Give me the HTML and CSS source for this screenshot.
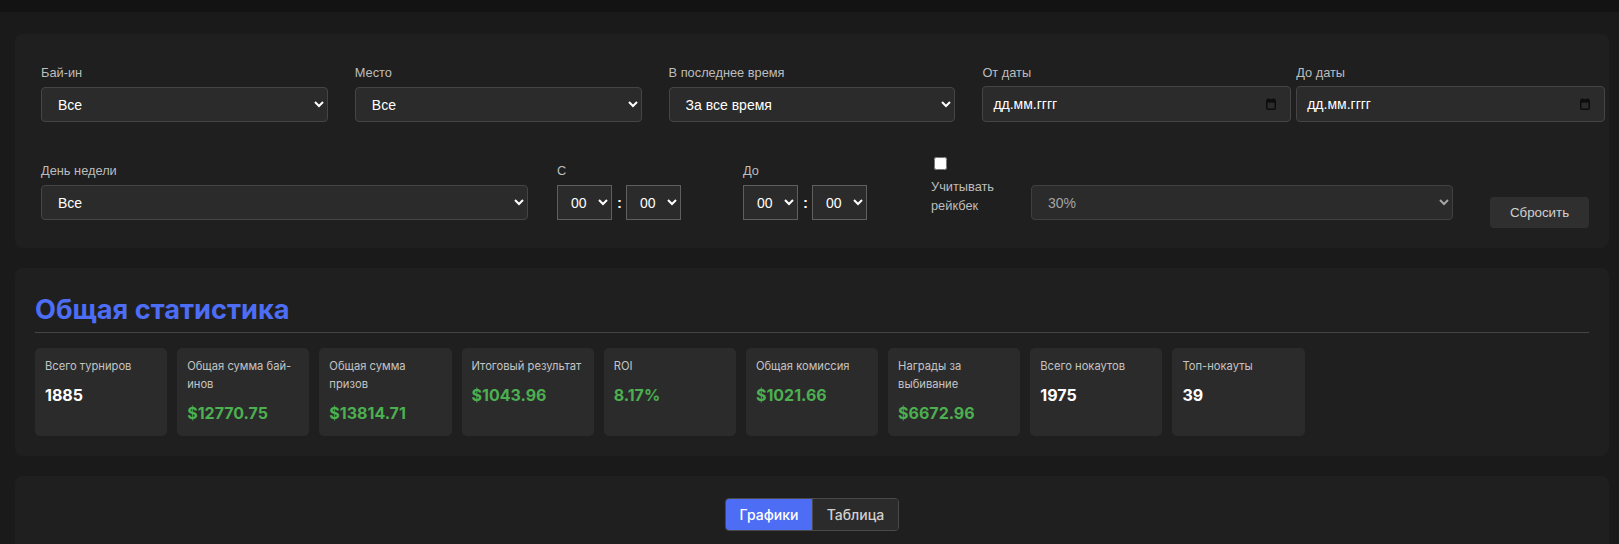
FILE: index.html
```html
<!DOCTYPE html>
<html lang="ru">
<head>
<meta charset="utf-8">
<title>Статистика</title>
<link rel="stylesheet" href="styles.css">
</head>
<body>
<div class="topbar"></div>
<main class="page">
  <section class="card filters">
    <div class="row-top">
      <div class="field">
        <label class="flabel">Бай-ин</label>
        <select class="sel"><option>Все</option></select>
      </div>
      <div class="field">
        <label class="flabel">Место</label>
        <select class="sel"><option>Все</option></select>
      </div>
      <div class="field">
        <label class="flabel">В последнее время</label>
        <select class="sel"><option>За все время</option></select>
      </div>
      <div class="field">
        <label class="flabel">От даты</label>
        <div class="date-input"><span>дд.мм.гггг</span>
          <svg class="cal" width="10" height="12" viewBox="0 0 10 12"><rect x="0.75" y="1.75" width="8.5" height="9.5" rx="1" fill="none" stroke="#0d0d0d" stroke-width="1.5"/><rect x="1" y="2" width="8" height="2.6" fill="#0d0d0d"/><path d="M2.5 0.3v2M7.5 0.3v2" stroke="#0d0d0d" stroke-width="1.3"/></svg>
        </div>
      </div>
      <div class="field">
        <label class="flabel">До даты</label>
        <div class="date-input"><span>дд.мм.гггг</span>
          <svg class="cal" width="10" height="12" viewBox="0 0 10 12"><rect x="0.75" y="1.75" width="8.5" height="9.5" rx="1" fill="none" stroke="#0d0d0d" stroke-width="1.5"/><rect x="1" y="2" width="8" height="2.6" fill="#0d0d0d"/><path d="M2.5 0.3v2M7.5 0.3v2" stroke="#0d0d0d" stroke-width="1.3"/></svg>
        </div>
      </div>
    </div>
    <div class="row-bottom">
      <div class="field">
        <label class="flabel">День недели</label>
        <select class="sel"><option>Все</option></select>
      </div>
      <div class="field">
        <label class="flabel">С</label>
        <div class="time">
          <select class="tsel"><option>00</option></select>
          <span class="colon">:</span>
          <select class="tsel"><option>00</option></select>
        </div>
      </div>
      <div class="field">
        <label class="flabel">До</label>
        <div class="time">
          <select class="tsel"><option>00</option></select>
          <span class="colon">:</span>
          <select class="tsel"><option>00</option></select>
        </div>
      </div>
      <div class="rake">
        <input type="checkbox" class="chk">
        <span class="rake-text">Учитывать рейкбек</span>
      </div>
      <div class="field">
        <select class="sel sel-muted"><option>30%</option></select>
      </div>
      <button class="reset">Сбросить</button>
    </div>
  </section>

  <section class="card stats">
    <h2 class="title">Общая статистика</h2>
    <div class="stat-grid">
      <div class="stat"><div class="slabel">Всего турниров</div><div class="sval">1885</div></div>
      <div class="stat"><div class="slabel">Общая сумма бай-инов</div><div class="sval green">$12770.75</div></div>
      <div class="stat"><div class="slabel">Общая сумма призов</div><div class="sval green">$13814.71</div></div>
      <div class="stat"><div class="slabel">Итоговый результат</div><div class="sval green">$1043.96</div></div>
      <div class="stat"><div class="slabel">ROI</div><div class="sval green">8.17%</div></div>
      <div class="stat"><div class="slabel">Общая комиссия</div><div class="sval green">$1021.66</div></div>
      <div class="stat"><div class="slabel">Награды за выбивание</div><div class="sval green">$6672.96</div></div>
      <div class="stat"><div class="slabel">Всего нокаутов</div><div class="sval">1975</div></div>
      <div class="stat"><div class="slabel">Топ-нокауты</div><div class="sval">39</div></div>
    </div>
  </section>

  <section class="card views">
    <div class="tabs">
      <button class="tab active">Графики</button>
      <button class="tab">Таблица</button>
    </div>
  </section>
</main>
</body>
</html>
```

FILE: styles.css
```css
* { box-sizing: border-box; }
html, body { margin: 0; padding: 0; }
body {
  background: #1a1a1a;
  color: #e0e0e0;
  font-family: Inter, "Noto Sans", sans-serif;
  overflow: hidden;
}
.topbar { height: 12px; background: #131313; }
.page {
  padding: 22px 10px 0 15px;
  display: flex;
  flex-direction: column;
  gap: 20px;
}
.card {
  background: #1f1f1f;
  border-radius: 8px;
}

/* Filters */
.filters {
  padding: 31px 26px 20px 26px;
  display: flex;
  flex-direction: column;
  gap: 24px;
  font-family: "Liberation Sans", Arial, sans-serif;
}
.row-top {
  display: grid;
  grid-template-columns: repeat(5, 1fr);
  column-gap: 27px;
  align-items: end;
}
.row-bottom {
  display: grid;
  grid-template-columns: 487px 157px 159px 71px 422px 1fr;
  column-gap: 29px;
  align-items: end;
}
.field {
  display: flex;
  flex-direction: column;
  margin-bottom: 8px;
  min-width: 0;
}
.flabel {
  font-size: 12.8px;
  line-height: 15px;
  color: #bdbdbd;
  margin-bottom: 7px;
}
.sel {
  width: 100%;
  height: 35px;
  background: #2b2b2b;
  color: #fff;
  border: 1px solid #454545;
  border-radius: 4px;
  padding: 0 10px 0 12px;
  font-family: "Liberation Sans", Arial, sans-serif;
  font-size: 14px;
}
.sel-muted { color: #a5a5a5; border-color: #404040; }
.date-input {
  box-sizing: content-box;
  width: 100%;
  height: 34px;
  margin-top: -1px;
  padding: 0 10px;
  background: #2b2b2b;
  border: 1px solid #454545;
  border-radius: 4px;
  display: flex;
  align-items: center;
  justify-content: space-between;
  color: #fff;
  font-size: 14px;
}
.cal { margin-right: 4px; }
.time {
  display: flex;
  align-items: center;
  gap: 5px;
}
.tsel {
  width: 55px;
  height: 35px;
  background: #2b2b2b;
  color: #fff;
  border: 1px solid #5f5f5f;
  border-radius: 0;
  padding: 0 4px 0 9px;
  font-family: "Liberation Sans", Arial, sans-serif;
  font-size: 14px;
}
.colon { color: #fff; font-size: 15px; font-weight: 700; width: 4px; }
.rake {
  display: flex;
  flex-direction: column;
  align-items: flex-start;
  margin-bottom: 13px;
}
.chk {
  width: 13px;
  height: 13px;
  margin: 3px 0 7px 3px;
}
.rake-text {
  font-size: 12.8px;
  line-height: 19px;
  color: #bdbdbd;
}
.reset {
  justify-self: start;
  margin-left: 8px;
  width: 99px;
  height: 31px;
  background: #2f2f2f;
  color: #d0d0d0;
  border: none;
  border-radius: 4px;
  font-family: "Liberation Sans", Arial, sans-serif;
  font-size: 13.33px;
}

/* Stats */
.stats { padding: 20px; }
.title {
  margin: 6px 0 15px 0;
  padding-bottom: 5px;
  border-bottom: 1px solid #454545;
  color: #4d6df5;
  font-size: 27.2px;
  font-weight: 700;
  line-height: 1.21;
}
.stat-grid {
  display: grid;
  grid-template-columns: repeat(auto-fill, minmax(130px, 1fr));
  gap: 10px;
}
.stat {
  background: #2b2b2b;
  border-radius: 5px;
  padding: 10px;
  min-height: 88px;
}
.slabel {
  font-size: 11.2px;
  line-height: 17.9px;
  color: #c4c4c4;
}
.sval {
  margin-top: 6px;
  font-size: 16px;
  line-height: 26px;
  font-weight: 700;
  color: #fff;
}
.sval.green { color: #4caf50; }

/* Views */
.views {
  padding: 22px 20px;
  min-height: 120px;
  display: flex;
  justify-content: center;
  align-items: flex-start;
}
.tabs {
  display: flex;
  border: 1px solid #4a4a4a;
  border-radius: 4px;
  overflow: hidden;
}
.tab {
  width: 86px;
  height: 31px;
  border: none;
  background: #2b2b2b;
  color: #d0d0d0;
  font-family: Inter, sans-serif;
  font-size: 14px;
  font-weight: 500;
}
.tab + .tab { border-left: 1px solid #4a4a4a; }
.tab.active { background: #4d6df5; color: #fff; }
```
